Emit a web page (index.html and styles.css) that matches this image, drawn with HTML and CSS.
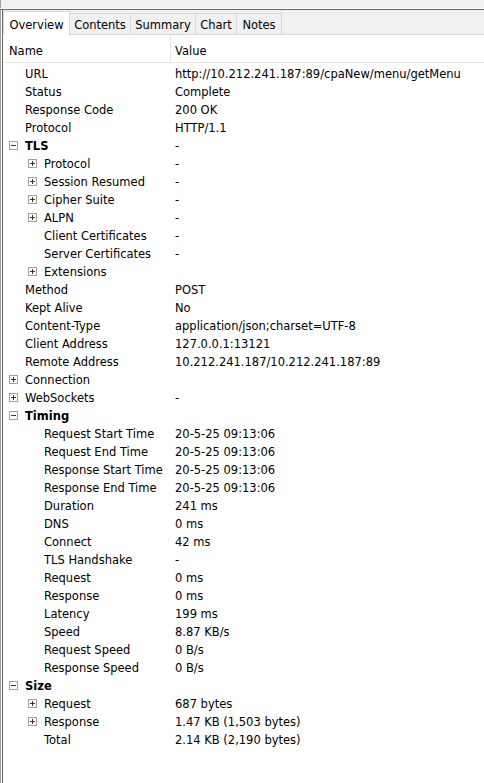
FILE: index.html
```html
<!DOCTYPE html>
<html>
<head>
<meta charset="utf-8">
<link rel="stylesheet" href="styles.css">
</head>
<body>
<div class="topstrip"></div>
<div class="panel">
  <div class="tabs">
    <div class="tab active w-overview">Overview</div>
    <div class="tab w-contents">Contents</div>
    <div class="tab w-summary">Summary</div>
    <div class="tab w-chart">Chart</div>
    <div class="tab w-notes">Notes</div>
  </div>
  <div class="table">
    <div class="head">
      <div class="hname">Name</div>
      <div class="hvalue">Value</div>
    </div>
    <div class="rows">
      <div class="row"><div class="name l0"><span class="sp"></span>URL</div><div class="value">http://10.212.241.187:89/cpaNew/menu/getMenu</div></div>
      <div class="row"><div class="name l0"><span class="sp"></span>Status</div><div class="value">Complete</div></div>
      <div class="row"><div class="name l0"><span class="sp"></span>Response Code</div><div class="value">200 OK</div></div>
      <div class="row"><div class="name l0"><span class="sp"></span>Protocol</div><div class="value">HTTP/1.1</div></div>
      <div class="row"><div class="name l0"><span class="box minus"></span><b>TLS</b></div><div class="value">-</div></div>
      <div class="row"><div class="name l1"><span class="box plus"></span>Protocol</div><div class="value">-</div></div>
      <div class="row"><div class="name l1"><span class="box plus"></span>Session Resumed</div><div class="value">-</div></div>
      <div class="row"><div class="name l1"><span class="box plus"></span>Cipher Suite</div><div class="value">-</div></div>
      <div class="row"><div class="name l1"><span class="box plus"></span>ALPN</div><div class="value">-</div></div>
      <div class="row"><div class="name l1"><span class="sp"></span>Client Certificates</div><div class="value">-</div></div>
      <div class="row"><div class="name l1"><span class="sp"></span>Server Certificates</div><div class="value">-</div></div>
      <div class="row"><div class="name l1"><span class="box plus"></span>Extensions</div><div class="value"></div></div>
      <div class="row"><div class="name l0"><span class="sp"></span>Method</div><div class="value">POST</div></div>
      <div class="row"><div class="name l0"><span class="sp"></span>Kept Alive</div><div class="value">No</div></div>
      <div class="row"><div class="name l0"><span class="sp"></span>Content-Type</div><div class="value">application/json;charset=UTF-8</div></div>
      <div class="row"><div class="name l0"><span class="sp"></span>Client Address</div><div class="value">127.0.0.1:13121</div></div>
      <div class="row"><div class="name l0"><span class="sp"></span>Remote Address</div><div class="value">10.212.241.187/10.212.241.187:89</div></div>
      <div class="row"><div class="name l0"><span class="box plus"></span>Connection</div><div class="value"></div></div>
      <div class="row"><div class="name l0"><span class="box plus"></span>WebSockets</div><div class="value">-</div></div>
      <div class="row"><div class="name l0"><span class="box minus"></span><b>Timing</b></div><div class="value"></div></div>
      <div class="row"><div class="name l1"><span class="sp"></span>Request Start Time</div><div class="value">20-5-25 09:13:06</div></div>
      <div class="row"><div class="name l1"><span class="sp"></span>Request End Time</div><div class="value">20-5-25 09:13:06</div></div>
      <div class="row"><div class="name l1"><span class="sp"></span>Response Start Time</div><div class="value">20-5-25 09:13:06</div></div>
      <div class="row"><div class="name l1"><span class="sp"></span>Response End Time</div><div class="value">20-5-25 09:13:06</div></div>
      <div class="row"><div class="name l1"><span class="sp"></span>Duration</div><div class="value">241 ms</div></div>
      <div class="row"><div class="name l1"><span class="sp"></span>DNS</div><div class="value">0 ms</div></div>
      <div class="row"><div class="name l1"><span class="sp"></span>Connect</div><div class="value">42 ms</div></div>
      <div class="row"><div class="name l1"><span class="sp"></span>TLS Handshake</div><div class="value">-</div></div>
      <div class="row"><div class="name l1"><span class="sp"></span>Request</div><div class="value">0 ms</div></div>
      <div class="row"><div class="name l1"><span class="sp"></span>Response</div><div class="value">0 ms</div></div>
      <div class="row"><div class="name l1"><span class="sp"></span>Latency</div><div class="value">199 ms</div></div>
      <div class="row"><div class="name l1"><span class="sp"></span>Speed</div><div class="value">8.87 KB/s</div></div>
      <div class="row"><div class="name l1"><span class="sp"></span>Request Speed</div><div class="value">0 B/s</div></div>
      <div class="row"><div class="name l1"><span class="sp"></span>Response Speed</div><div class="value">0 B/s</div></div>
      <div class="row"><div class="name l0"><span class="box minus"></span><b>Size</b></div><div class="value"></div></div>
      <div class="row"><div class="name l1"><span class="box plus"></span>Request</div><div class="value">687 bytes</div></div>
      <div class="row"><div class="name l1"><span class="box plus"></span>Response</div><div class="value">1.47 KB (1,503 bytes)</div></div>
      <div class="row"><div class="name l1"><span class="sp"></span>Total</div><div class="value">2.14 KB (2,190 bytes)</div></div>
    </div>
  </div>
</div>
</body>
</html>
```

FILE: styles.css
```css
html, body {
  margin: 0;
  padding: 0;
  height: 100%;
}
body {
  font-family: "DejaVu Sans", sans-serif;
  font-size: 11.5px;
  color: #000;
  background: #fff;
  display: flex;
  flex-direction: column;
  overflow: hidden;
}
.topstrip {
  height: 8px;
  background: #f0f0f0;
  border-bottom: 1px solid #f9f9f9;
  border-left: 1px solid #a0a0a0;
  flex: none;
}
.panel {
  flex: 1;
  border-top: 1px solid #696969;
  border-left: 1px solid #a0a0a0;
  display: flex;
  flex-direction: column;
}
.panel > * {
  margin-left: 1px;
  border-left: 1px solid #696969;
}
.tabs {
  display: flex;
  align-items: flex-end;
  background: #f0f0f0;
  height: 24px;
  border-bottom: 1px solid #d9d9d9;
  flex: none;
}
.tab {
  box-sizing: border-box;
  height: 21px;
  padding-top: 3px;
  line-height: 16px;
  text-align: center;
  border: 1px solid #d9d9d9;
  border-bottom: none;
  border-left: none;
  background: #f0f0f0;
}
.tab.active {
  background: #fff;
  height: 24px;
  padding-top: 5px;
  border-left: 1px solid #d9d9d9;
  margin-bottom: -1px;
}
.w-overview { width: 67px; }
.w-contents { width: 61px; }
.w-summary { width: 65px; }
.w-chart { width: 41px; }
.w-notes { width: 45px; }
.table {
  flex: 1;
  background: #fff;
}
.head {
  display: flex;
  height: 27px;
  border-bottom: 1px solid #e5e5e5;
}
.hname {
  width: 161px;
  padding-left: 6px;
  padding-top: 2px;
  line-height: 28px;
  border-right: 1px solid #e5e5e5;
}
.hvalue {
  padding-left: 4px;
  padding-top: 2px;
  line-height: 28px;
}
.rows {
  padding-top: 1px;
}
.row {
  display: flex;
  height: 18px;
  line-height: 18px;
  white-space: nowrap;
}
.name {
  width: 172px;
  flex: none;
  display: flex;
  align-items: center;
  box-sizing: border-box;
  padding-top: 1px;
}
.name.l0 { padding-left: 6px; }
.name.l1 { padding-left: 25px; }
.name b { font-weight: bold; }
.value {
  flex: 1;
  padding-top: 1px;
}
.sp {
  width: 9px;
  margin-right: 7px;
  flex: none;
}
.box {
  width: 7px;
  height: 7px;
  border: 1px solid #a0a0a0;
  margin-right: 7px;
  flex: none;
  position: relative;
  background: #fff;
}
.box::before {
  content: "";
  position: absolute;
  left: 1px;
  top: 3px;
  width: 5px;
  height: 1px;
  background: #333;
}
.box.plus::after {
  content: "";
  position: absolute;
  left: 3px;
  top: 1px;
  width: 1px;
  height: 5px;
  background: #333;
}
```
